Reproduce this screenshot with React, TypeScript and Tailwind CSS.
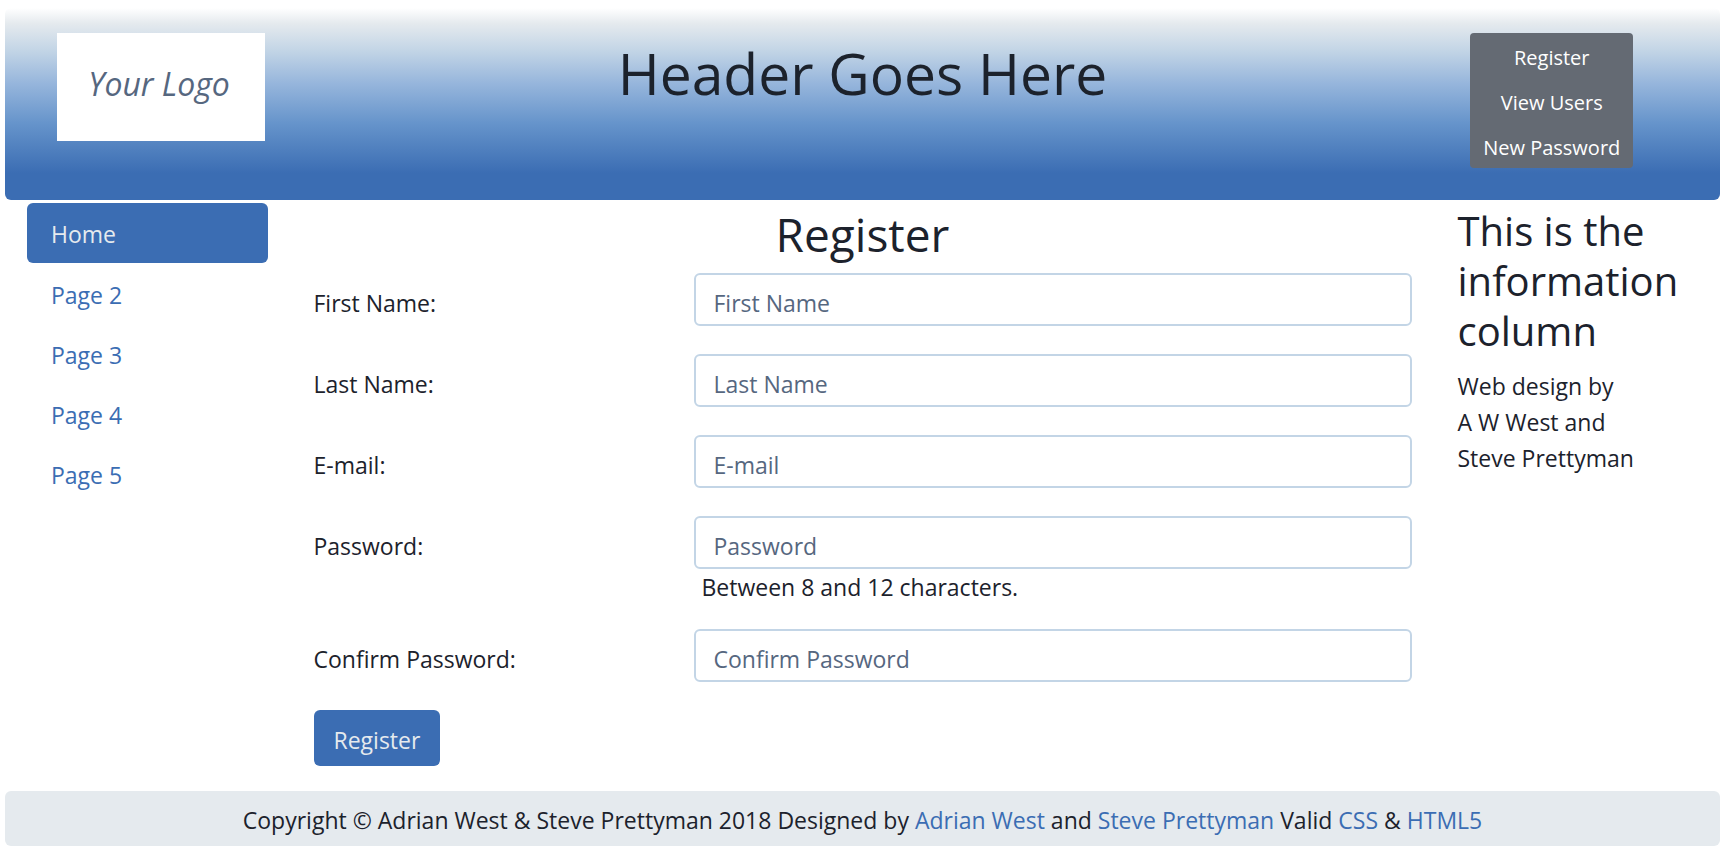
import React from "react";

const pages = ["Home", "Page 2", "Page 3", "Page 4", "Page 5"];

const fields = [
  { id: "first_name", label: "First Name", type: "text" },
  { id: "last_name", label: "Last Name", type: "text" },
  { id: "email", label: "E-mail", type: "email" },
  { id: "password1", label: "Password", type: "password", help: "Between 8 and 12 characters." },
  { id: "password2", label: "Confirm Password", type: "password" },
];

const link = "text-[#3b6db3] hover:underline";

function Header() {
  return (
    <header className="mx-[2px] grid h-48 grid-cols-12 rounded-md bg-[linear-gradient(to_bottom,#ffffff_0%,#e5eaee_8%,#c3d5e6_22%,#97b6dc_39%,#6694cb_60%,#3b6db3_86%)] px-7 pt-[25px]">
      <div className="col-span-2 px-6">
        <div className="flex h-[108px] max-w-[208px] items-center justify-center bg-white pr-1 pb-1.5 text-[32px] leading-9 text-[#56677f] italic">
          Your Logo
        </div>
      </div>
      <h1 className="col-span-8 pt-1 text-center text-[57px] leading-[72px]">Header Goes Here</h1>
      <nav className="col-span-2 flex justify-center self-start pr-1" aria-label="Account">
        <div className="flex w-[163px] flex-col overflow-hidden rounded bg-[#646a73] text-center text-[20px] text-white">
          <button type="button" className="h-[45px] pt-1 hover:bg-[#545b62]">Register</button>
          <button type="button" className="h-[45px] pt-1 hover:bg-[#545b62]">View Users</button>
          <button type="button" className="h-[45px] pt-1 whitespace-nowrap hover:bg-[#545b62]">New Password</button>
        </div>
      </nav>
    </header>
  );
}

function SideNav() {
  return (
    <nav className="col-span-2 pr-[22px] pl-6" aria-label="Pages">
      <ul>
        {pages.map((page, i) => (
          <li key={page}>
            <a
              href="#"
              aria-current={i === 0 ? "page" : undefined}
              className={
                i === 0
                  ? "block h-[60px] rounded-md bg-[#3b6db3] px-6 leading-[62px] text-[#e5eaee]"
                  : "block h-[60px] px-6 leading-[64px] text-[#3b6db3]"
              }
            >
              {page}
            </a>
          </li>
        ))}
      </ul>
    </nav>
  );
}

function RegisterForm() {
  return (
    <main className="col-span-8">
      <h2 className="mb-2.5 pt-0.5 text-center text-[46px] leading-[58px]">Register</h2>
      <form onSubmit={(e) => e.preventDefault()}>
        {fields.map((field) => (
          <div key={field.id} className="mb-7 grid grid-cols-3">
            <label htmlFor={field.id} className="h-[53px] px-6 leading-[60px]">
              {field.label}:
            </label>
            <div className="col-span-2 pr-6 pl-[22px]">
              <input
                id={field.id}
                type={field.type}
                placeholder={field.label}
                className="block h-[53px] w-full rounded-md border-2 border-[#c3d5e6] bg-white px-[18px] pt-1.5 placeholder:text-[#56677f] focus:border-[#6694cb] focus:outline-none"
              />
              {field.help && <p className="px-2 pt-1 leading-7">{field.help}</p>}
            </div>
          </div>
        ))}
        <button type="submit" className="mx-6 h-14 rounded-md bg-[#3b6db3] px-5 pt-1 text-[#e5eaee]">
          Register
        </button>
      </form>
    </main>
  );
}

function InfoColumn() {
  return (
    <aside className="col-span-2 px-[22px]">
      <h3 className="mb-3 pt-[3px] text-[40px] leading-[50px]">This is the information column</h3>
      <p className="leading-9">
        Web design by
        <br />A W West and
        <br />
        Steve Prettyman
      </p>
    </aside>
  );
}

export default function App() {
  return (
    <div className="min-h-screen bg-white px-[3px] pt-2 font-['Open_Sans','Noto_Sans',sans-serif] text-[23px] text-[#1c222c]">
      <Header />
      <div className="grid grid-cols-12 pt-[3px] pb-[25px]">
        <SideNav />
        <RegisterForm />
        <InfoColumn />
      </div>
      <footer className="mx-[2px] rounded-md bg-[#e5eaee] pt-2.5 pb-1.5 text-center leading-[39px]">
        Copyright © Adrian West &amp; Steve Prettyman 2018 Designed by{" "}
        <a href="#" className={link}>Adrian West</a> and <a href="#" className={link}>Steve Prettyman</a> Valid{" "}
        <a href="#" className={link}>CSS</a> &amp; <a href="#" className={link}>HTML5</a>
      </footer>
    </div>
  );
}
